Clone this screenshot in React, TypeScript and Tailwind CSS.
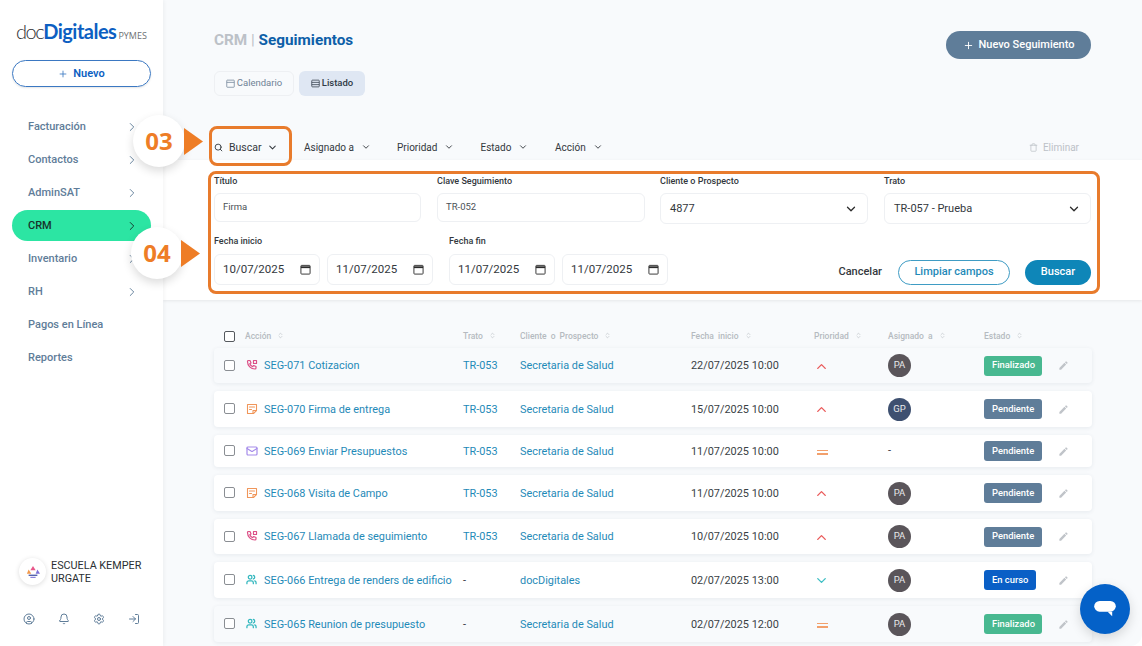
import { Bell, ChevronDown, ChevronRight, ChevronsUpDown, CircleUser, LogIn, Mail, Plus, Search, Settings, Trash, Users } from "lucide-react";
import { MdEdit } from "react-icons/md";

const navItems = [
  { label: "Facturación", arrow: true },
  { label: "Contactos", arrow: true },
  { label: "AdminSAT", arrow: true },
  { label: "CRM", arrow: true, active: true },
  { label: "Inventario", arrow: true },
  { label: "RH", arrow: true },
  { label: "Pagos en Línea" },
  { label: "Reportes" },
];

const columns = [
  { label: "Acción", className: "pl-[31px]" },
  { label: "Trato" },
  { label: "Cliente o Prospecto" },
  { label: "Fecha inicio" },
  { label: "Prioridad" },
  { label: "Asignado a" },
  { label: "Estado" },
];

const rows = [
  { kind: "call", title: "SEG-071 Cotizacion", trato: "TR-053", client: "Secretaria de Salud", date: "22/07/2025 10:00", priority: "high", user: "PA", status: "Finalizado", height: "h-[35px]", bg: "bg-[#f8fafc]" },
  { kind: "note", title: "SEG-070 Firma de entrega", trato: "TR-053", client: "Secretaria de Salud", date: "15/07/2025 10:00", priority: "high", user: "GP", status: "Pendiente", height: "h-9", bg: "bg-white" },
  { kind: "mail", title: "SEG-069 Enviar Presupuestos", trato: "TR-053", client: "Secretaria de Salud", date: "11/07/2025 10:00", priority: "mid", user: "-", status: "Pendiente", height: "h-8", bg: "bg-white" },
  { kind: "note", title: "SEG-068 Visita de Campo", trato: "TR-053", client: "Secretaria de Salud", date: "11/07/2025 10:00", priority: "high", user: "PA", status: "Pendiente", height: "h-9", bg: "bg-white" },
  { kind: "call", title: "SEG-067 Llamada de seguimiento", trato: "TR-053", client: "Secretaria de Salud", date: "10/07/2025 10:00", priority: "high", user: "PA", status: "Pendiente", height: "h-[35px]", bg: "bg-white" },
  { kind: "team", title: "SEG-066 Entrega de renders de edificio", trato: "-", client: "docDigitales", date: "02/07/2025 13:00", priority: "low", user: "PA", status: "En curso", height: "h-9", bg: "bg-white" },
  { kind: "team", title: "SEG-065 Reunion de presupuesto", trato: "-", client: "Secretaria de Salud", date: "02/07/2025 12:00", priority: "mid", user: "PA", status: "Finalizado", height: "h-9", bg: "bg-[#f8fafc]" },
];

const statusStyles: Record<string, string> = {
  Finalizado: "bg-[#48b890] w-[58px]",
  Pendiente: "bg-[#5f7d99] w-[58px]",
  "En curso": "bg-[#0a5fc6] w-[52px]",
};

const PhoneIcon = () => (
  <svg viewBox="0 0 24 24" fill="none" stroke="#dc4f86" strokeWidth="2.4" strokeLinecap="round" strokeLinejoin="round" className="w-[12px] h-[12px]">
    <path d="M5 3h3l2 5-2.5 1.5a11 11 0 0 0 6 6L15 13l5 2v3a2 2 0 0 1-2 2A15 15 0 0 1 3 5a2 2 0 0 1 2-2" />
    <path d="M15 3h6v6h-6z" />
  </svg>
);

const NoteIcon = () => (
  <svg viewBox="0 0 24 24" fill="none" stroke="#f0965a" strokeWidth="2.2" strokeLinecap="round" strokeLinejoin="round" className="w-[12px] h-[12px]">
    <path d="M3 3h18v12l-6 6H3z" />
    <path d="M14 21v-6h7" />
    <path d="M7 8h10M7 13h4" />
  </svg>
);

const ActionIcon = ({ kind }: { kind: string }) => {
  if (kind === "call") return <PhoneIcon />;
  if (kind === "note") return <NoteIcon />;
  if (kind === "mail") return <Mail className="w-[12px] h-[12px] text-[#a58bea]" strokeWidth={2.4} />;
  return <Users className="w-[11px] h-[11px] text-[#35b8bf]" strokeWidth={2.8} />;
};

const PriorityIcon = ({ level }: { level: string }) => {
  if (level === "mid") {
    return (
      <div className="flex flex-col gap-[2px] w-[11px] ml-[3px] mt-[2px]">
        <div className="h-[1.5px] bg-[#f2a06c]" />
        <div className="h-[1.5px] bg-[#f2a06c]" />
      </div>
    );
  }
  if (level === "low") return <ChevronDown className="w-[15px] h-[15px] text-[#3fbfc4] mt-px" strokeWidth={2.2} />;
  return <ChevronDown className="w-[15px] h-[15px] text-[#ea5a5a] mt-px rotate-180" strokeWidth={2.2} />;
};

const CalendarIcon = () => (
  <svg viewBox="0 0 12 12" className="w-[11px] h-[11px] text-[#2b2b2b]" fill="none" stroke="currentColor">
    <rect x="1" y="1.5" width="10" height="9.5" rx="0.8" />
    <path d="M1 3.5h10" strokeWidth="2" />
  </svg>
);

const DateField = ({ value }: { value: string }) => (
  <div className="w-[106px] h-[31px] bg-white border border-[#eef0f3] rounded-md flex items-center justify-between pl-[8px] pr-[8px] text-[11.5px] text-[#33383d]">
    <span>{value}</span>
    <CalendarIcon />
  </div>
);

const Field = ({ label, value, select, width }: { label: string; value: string; select?: boolean; width: string }) => (
  <div className={`${width} flex flex-col`}>
    <label className="text-[9px] leading-[12px] font-medium text-[#33383d] h-[18px]">{label}</label>
    {select ? (
      <div className="h-[31px] border border-[#eef0f3] rounded-md flex items-center justify-between pl-[9px] pr-[9px] text-[11px] text-[#33383d]">
        <span className="pt-[2px]">{value}</span>
        <ChevronDown className="w-[14px] h-[14px] text-[#2b2b2b]" strokeWidth={2.2} />
      </div>
    ) : (
      <div className="h-[29px] border border-[#eef0f3] rounded-md flex items-center pl-[8px] text-[9.5px] text-[#4b5157]">{value}</div>
    )}
  </div>
);

const FilterTab = ({ label, className }: { label: string; className: string }) => (
  <div className={`flex items-center gap-[7px] text-[10px] text-[#33383d] ${className}`}>
    <span>{label}</span>
    <ChevronDown className="w-[10px] h-[10px] text-[#33383d]" strokeWidth={2.2} />
  </div>
);

const Callout = ({ text, className, arrow }: { text: string; className: string; arrow: string }) => (
  <>
    <div className={`absolute w-[52px] h-[52px] rounded-full bg-white shadow-[0_4px_10px_rgba(0,0,0,0.14)] flex items-center justify-center text-[24px] font-bold text-[#ee7d26] z-20 font-['Open_Sans',sans-serif] ${className}`}>
      {text}
    </div>
    <div className={`absolute w-[19px] h-[27px] bg-[#ee7d26] z-20 [clip-path:polygon(0_0,100%_50%,0_100%)] ${arrow}`} />
  </>
);

const Sidebar = () => (
  <aside className="w-[163px] shrink-0 h-full bg-white shadow-[1px_0_4px_rgba(0,0,0,0.05)] flex flex-col z-10">
    <div className="pl-[16px] pt-[19px] h-[60px] flex items-baseline text-[20px] leading-[24px] tracking-[-0.5px] font-['Lato',sans-serif] whitespace-nowrap">
      <span className="font-light text-[#2f2f33] tracking-[-1.5px]">doc</span>
      <span className="font-bold text-[#0d5fc2]">Digitales</span>
      <span className="text-[9px] tracking-normal text-[#6d6f73] ml-[2px] font-['Open_Sans',sans-serif]">PYMES</span>
    </div>
    <div className="mx-[12px] h-[27px] rounded-full border border-[#3b78c2] flex items-center justify-center gap-[5px] text-[11px] font-semibold text-[#0d5fc2] shadow-[0_1px_2px_rgba(0,0,0,0.1)]">
      <Plus className="w-[10px] h-[10px] text-[#3b78c2]" strokeWidth={2} />
      <span className="pt-[2px]">Nuevo</span>
    </div>
    <nav className="mt-[23px] flex flex-col">
      {navItems.map((item) => (
        <div key={item.label} className="h-[33px] flex items-center">
          <div className={`ml-[12px] w-[139px] h-[31px] rounded-full flex items-center justify-between pl-[16px] pr-[12px] text-[11px] font-medium ${item.active ? "bg-[#2ce5a3] text-[#17332b]" : "text-[#5f7d99]"}`}>
            <span className="pt-[2px]">{item.label}</span>
            {item.arrow && <ChevronRight className={`w-[14px] h-[14px] ${item.active ? "text-[#17332b]" : "text-[#5f7d99]"}`} strokeWidth={1.6} />}
          </div>
        </div>
      ))}
    </nav>
    <div className="mt-auto flex items-center pl-[19px] gap-[5px]">
      <div className="w-[27px] h-[27px] rounded-full bg-white shadow-[0_1px_5px_rgba(0,0,0,0.14)] flex items-center justify-center">
        <svg viewBox="0 0 16 16" className="w-[14px] h-[14px]">
          <path d="M8 1l3 5H5z" fill="#e8578a" />
          <path d="M3 5l3 5H1z" fill="#f2994a" />
          <path d="M13 5l3 5h-5z" fill="#7b6fd6" />
          <rect x="3" y="11" width="10" height="1.5" fill="#4a5aa8" />
          <rect x="5" y="13.5" width="6" height="1.2" fill="#7b6fd6" />
        </svg>
      </div>
      <div className="text-[10.8px] leading-[13px] text-[#2b2f33]">ESCUELA KEMPER<br />URGATE</div>
    </div>
    <div className="mt-[28px] mb-[21px] pl-[23px] flex gap-[23px] text-[#5f7d99]">
      <CircleUser className="w-[12px] h-[12px]" />
      <Bell className="w-[12px] h-[12px]" />
      <Settings className="w-[12px] h-[12px]" />
      <LogIn className="w-[12px] h-[12px]" />
    </div>
  </aside>
);

export default function App() {
  return (
    <div className="relative w-[1142px] h-[646px] overflow-hidden flex bg-white font-['Roboto',sans-serif]">
      <Sidebar />
      <main className="flex-1 bg-[#f8fafc] rounded-br-xl flex flex-col">
        <div className="px-[51px] pt-[31px] flex items-center justify-between h-[59px]">
          <h1 className="text-[15.3px] font-bold text-[#bcc1c7] -mt-[10px]">
            CRM <span className="font-normal">|</span> <span className="text-[#0d5fa8]">Seguimientos</span>
          </h1>
          <button className="w-[145px] h-[28px] rounded-full bg-[#5f7d99] text-white text-[11px] font-medium flex items-center justify-center gap-[5px]">
            <Plus className="w-[11px] h-[11px]" strokeWidth={2} />
            Nuevo Seguimiento
          </button>
        </div>

        <div className="px-[51px] mt-[12px] flex gap-[5px]">
          <div className="w-[80px] h-[25px] rounded-md bg-[#f8fafc] border border-[#eef0f3] flex items-center justify-center gap-[2px] text-[9.5px] text-[#6f8296]">
            <svg viewBox="0 0 12 12" className="w-[9px] h-[9px]" fill="none" stroke="currentColor"><rect x="1" y="1.5" width="10" height="9.5" rx="0.8" /><path d="M1 4.5h10" /></svg>
            Calendario
          </div>
          <div className="w-[66px] h-[25px] rounded-md bg-[#dfe7f3] flex items-center justify-center gap-[2px] text-[9.5px] font-medium text-[#2f3a46]">
            <svg viewBox="0 0 12 12" className="w-[9px] h-[9px]" fill="none" stroke="currentColor"><rect x="1" y="1.5" width="10" height="9" rx="1" /><path d="M1 4.5h10M1 7.5h10" /></svg>
            Listado
          </div>
        </div>

        <div className="h-[64px] pl-[51px] pr-[63px] pt-[38px] flex items-center">
          <div className="flex items-center w-[90px] gap-[6px] text-[10.5px] text-[#33383d]">
            <Search className="w-[9px] h-[9px]" strokeWidth={2.4} />
            <span className="pt-[2px]">Buscar</span>
            <ChevronDown className="w-[11px] h-[11px] -ml-[1px]" strokeWidth={2.2} />
          </div>
          <FilterTab label="Asignado a" className="w-[93px]" />
          <FilterTab label="Prioridad" className="w-[83.5px]" />
          <FilterTab label="Estado" className="w-[74.5px]" />
          <FilterTab label="Acción" className="w-[60px]" />
          <div className="ml-auto flex items-center gap-[5px] text-[10px] text-[#bcc1c7]">
            <Trash className="w-[9px] h-[9px]" />
            Eliminar
          </div>
        </div>

        <section className="h-[140px] bg-white shadow-[0_1px_3px_rgba(0,0,0,0.08)] pl-[51px] pr-[51px] pt-[15px]">
          <div className="flex">
            <Field label="Título" value="Firma" width="w-[207px] mr-[16px]" />
            <Field label="Clave Seguimiento" value="TR-052" width="w-[208px] mr-[15px]" />
            <Field label="Cliente o Prospecto" value="4877" select width="w-[208px] mr-[16px]" />
            <Field label="Trato" value="TR-057 - Prueba" select width="w-[207px]" />
          </div>
          <div className="flex mt-[11px]">
            <div className="mr-[16px]">
              <div className="text-[9px] leading-[12px] font-medium text-[#33383d] h-[19px]">Fecha inicio</div>
              <div className="flex gap-[7px]">
                <DateField value="10/07/2025" />
                <DateField value="11/07/2025" />
              </div>
            </div>
            <div>
              <div className="text-[9px] leading-[12px] font-medium text-[#33383d] h-[19px]">Fecha fin</div>
              <div className="flex gap-[7px]">
                <DateField value="11/07/2025" />
                <DateField value="11/07/2025" />
              </div>
            </div>
            <div className="ml-auto self-end flex items-center text-[11px] font-medium">
              <span className="text-[#33383d] mr-[16px]">Cancelar</span>
              <button className="w-[112px] h-[25px] rounded-full border border-[#3f9cc4] text-[#1f8ab8] mr-[15px]">Limpiar campos</button>
              <button className="w-[66px] h-[25px] rounded-full bg-[#0e86b8] text-white">Buscar</button>
            </div>
          </div>
        </section>

        <div className="mt-[24px] pl-[51px] pr-[50px]">
          <div className="grid grid-cols-[249px_57px_171px_123px_74px_96px_74px_1fr] items-center h-[23px] text-[8.5px] font-medium text-[#b5bac0] [word-spacing:2px]">
            {columns.map((col, i) => (
              <div key={col.label} className={`relative flex items-center gap-[6px] pt-[2px] ${col.className ?? ""}`}>
                {i === 0 && <span className="absolute left-[10px] w-[11px] h-[11px] rounded-[2px] border border-[#55595e] bg-white" />}
                <span>{col.label}</span>
                <ChevronsUpDown className="w-[7px] h-[11px] text-[#b5bac0] -mt-[2px]" />
              </div>
            ))}
          </div>
          <div className="mt-[1px] flex flex-col gap-2">
            {rows.map((row) => (
              <div
                key={row.title}
                className={`grid grid-cols-[249px_57px_171px_123px_74px_96px_74px_1fr] items-center rounded-[4px] shadow-[0_1px_4px_rgba(30,50,80,0.08)] text-[10.9px] text-[#1f8ab8] ${row.height} ${row.bg}`}
              >
                <div className="flex items-center whitespace-nowrap">
                  <span className="ml-[10px] w-[11px] h-[11px] rounded-[2px] border border-[#8a8e93] bg-white shrink-0" />
                  <span className="ml-[11px] mr-[7px] w-[11px] shrink-0"><ActionIcon kind={row.kind} /></span>
                  <span className="pt-[2px]">{row.title}</span>
                </div>
                <div className={row.trato === "-" ? "text-[#33383d] pt-[2px]" : "pt-[2px]"}>{row.trato}</div>
                <div className="pt-[2px]">{row.client}</div>
                <div className="text-[#3a3f45] pt-[2px]">{row.date}</div>
                <div><PriorityIcon level={row.priority} /></div>
                <div>
                  {row.user === "-" ? (
                    <span className="text-[#33383d]">-</span>
                  ) : (
                    <div className={`w-[23px] h-[23px] rounded-full flex items-center justify-center text-[9.5px] text-[#e8e8ea] ${row.user === "GP" ? "bg-[#3e5070]" : "bg-[#5a555a]"}`}>{row.user}</div>
                  )}
                </div>
                <div>
                  <div className={`h-[20px] rounded-[3px] flex items-center pl-[8px] text-[9.4px] font-medium text-white ${statusStyles[row.status]}`}>{row.status}</div>
                </div>
                <div><MdEdit className="w-[11px] h-[11px] text-[#c0c4c9]" /></div>
              </div>
            ))}
          </div>
        </div>
      </main>

      {/* annotations over the page */}
      <div className="absolute left-[209px] top-[126px] w-[83px] h-[40px] rounded-lg border-[3px] border-[#e87b2c]" />
      <div className="absolute left-[208px] top-[171px] w-[892px] h-[123px] rounded-lg border-[3px] border-[#e87b2c]" />
      <Callout text="03" className="left-[133px] top-[115px]" arrow="left-[184px] top-[128px]" />
      <Callout text="04" className="left-[131px] top-[227px]" arrow="left-[181px] top-[240px]" />

      <div className="absolute left-[1080px] top-[584px] w-[50px] h-[50px] rounded-full bg-[#0461c8] shadow-[0_4px_12px_rgba(0,0,0,0.15)] flex items-center justify-center">
        <svg viewBox="0 0 26 20" className="w-[24px] h-[18px]">
          <rect x="1" y="1" width="24" height="12" rx="6" fill="white" />
          <path d="M16 13h5v5z" fill="white" />
        </svg>
      </div>
    </div>
  );
}
